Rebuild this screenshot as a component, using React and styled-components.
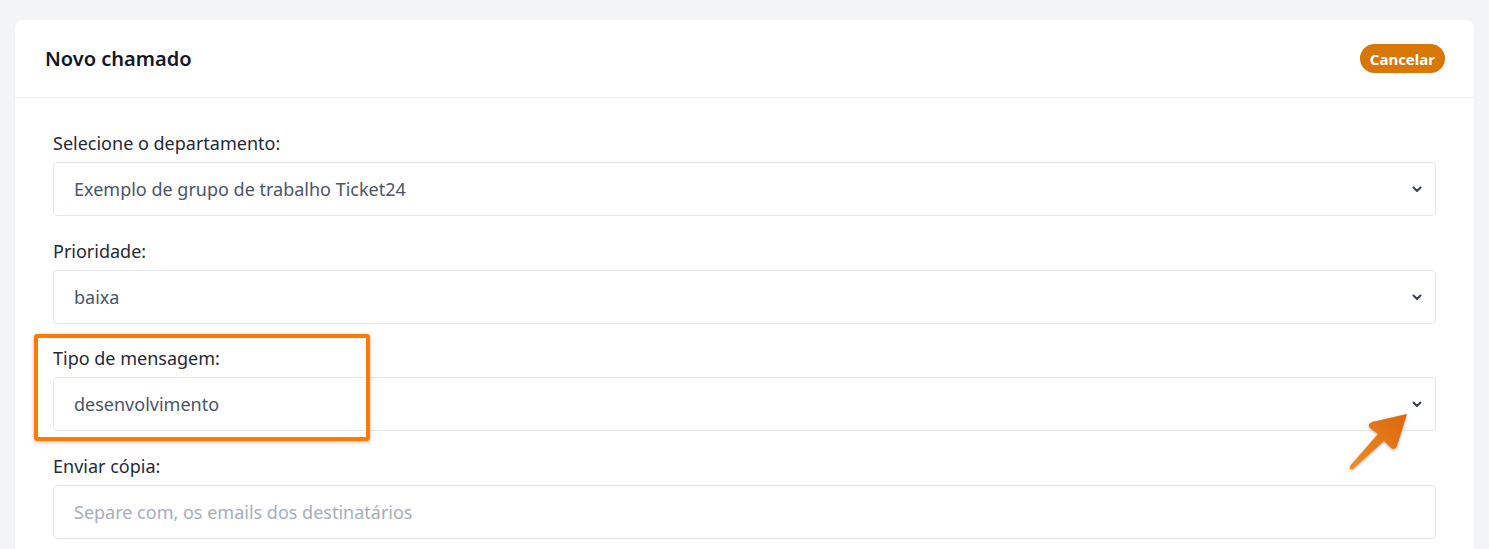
import React from 'react';
import styled, { createGlobalStyle } from 'styled-components';

const GlobalStyle = createGlobalStyle`
  html, body {
    margin: 0;
    padding: 0;
    background: #f3f4f6;
    font-family: "Noto Sans", "Open Sans", sans-serif;
  }
`;

const Page = styled.div`
  position: relative;
  padding: 20px 15px 0;
  height: 549px;
  box-sizing: border-box;
  overflow: hidden;
`;

const Card = styled.div`
  background: #fff;
  border-radius: 8px 8px 0 0;
  box-shadow: 0 1px 2px rgba(0, 0, 0, 0.04);
`;

const CardHeader = styled.div`
  display: flex;
  justify-content: space-between;
  align-items: center;
  height: 77px;
  padding: 0 29px 0 30px;
  border-bottom: 1px solid #eceef1;
`;

const Title = styled.h2`
  margin: 0;
  font-size: 20px;
  font-weight: 600;
  color: #111827;
`;

const CancelButton = styled.button`
  border: none;
  background: #d97706;
  color: #fff;
  font-family: inherit;
  font-weight: 700;
  font-size: 15px;
  height: 29px;
  padding: 0 10px;
  border-radius: 999px;
  cursor: pointer;
`;

const CardBody = styled.div`
  padding: 33px 38px 20px 38px;
`;

const Field = styled.div`
  margin-bottom: 22.5px;
`;

const Label = styled.label`
  display: block;
  font-size: 18px;
  line-height: 24px;
  color: #1f2937;
  margin-bottom: 7px;
`;

const SelectWrap = styled.div`
  position: relative;
`;

const Select = styled.select`
  appearance: none;
  width: 100%;
  height: 54px;
  box-sizing: border-box;
  border: 1px solid #e5e7eb;
  border-radius: 4px;
  background: #fff;
  padding: 0 20px;
  font-family: inherit;
  font-size: 18px;
  color: #4a5568;
  outline: none;
`;

const Chevron = styled.svg`
  position: absolute;
  right: 13px;
  top: 50%;
  transform: translateY(-50%);
  pointer-events: none;
`;

const Input = styled.input`
  width: 100%;
  height: 54px;
  box-sizing: border-box;
  border: 1px solid #e5e7eb;
  border-radius: 4px;
  padding: 0 20px;
  font-family: inherit;
  font-size: 18px;
  color: #4a5568;
  outline: none;

  &::placeholder {
    color: #a6aebb;
  }
`;

const Highlight = styled.div`
  position: absolute;
  left: 34px;
  top: 334px;
  width: 336px;
  height: 107px;
  box-sizing: border-box;
  border: 4px solid #ff7a00;
  border-radius: 3px;
  box-shadow: 0 1px 4px rgba(0, 0, 0, 0.25);
  pointer-events: none;
`;

const Pointer = styled.svg`
  position: absolute;
  left: 1340px;
  top: 405px;
  filter: drop-shadow(0 1px 1.5px rgba(0, 0, 0, 0.3));
  pointer-events: none;
`;

function ChevronIcon() {
  return (
    <Chevron width="12" height="12" viewBox="0 0 12 12">
      <path d="M2.5 4.5 L6 8 L9.5 4.5" fill="none" stroke="#374151" strokeWidth="2" strokeLinecap="round" strokeLinejoin="round" />
    </Chevron>
  );
}

function SelectField({ label, value }) {
  return (
    <Field>
      <Label>{label}</Label>
      <SelectWrap>
        <Select defaultValue={value}>
          <option value={value}>{value}</option>
        </Select>
        <ChevronIcon />
      </SelectWrap>
    </Field>
  );
}

export default function App() {
  return (
    <>
      <GlobalStyle />
      <Page>
        <Card>
          <CardHeader>
            <Title>Novo chamado</Title>
            <CancelButton>Cancelar</CancelButton>
          </CardHeader>
          <CardBody>
            <SelectField label="Selecione o departamento:" value="Exemplo de grupo de trabalho Ticket24" />
            <SelectField label="Prioridade:" value="baixa" />
            <SelectField label="Tipo de mensagem:" value="desenvolvimento" />
            <Field>
              <Label>Enviar cópia:</Label>
              <Input placeholder="Separe com, os emails dos destinatários" />
            </Field>
          </CardBody>
        </Card>
        <Highlight />
        <Pointer width="80" height="75" viewBox="0 0 80 75">
          <defs>
            <linearGradient id="arrowFill" x1="0" y1="1" x2="1" y2="0">
              <stop offset="0" stopColor="#f58a25" />
              <stop offset="1" stopColor="#d9680c" />
            </linearGradient>
          </defs>
          <path
            d="M67 9 L32 17 Q27 19 30 23 L38 29 L10 61 Q9 65 13 64 L44 36 L51 43 Q55 46 57 41 Z"
            fill="url(#arrowFill)"
            strokeLinejoin="round"
          />
        </Pointer>
      </Page>
    </>
  );
}
